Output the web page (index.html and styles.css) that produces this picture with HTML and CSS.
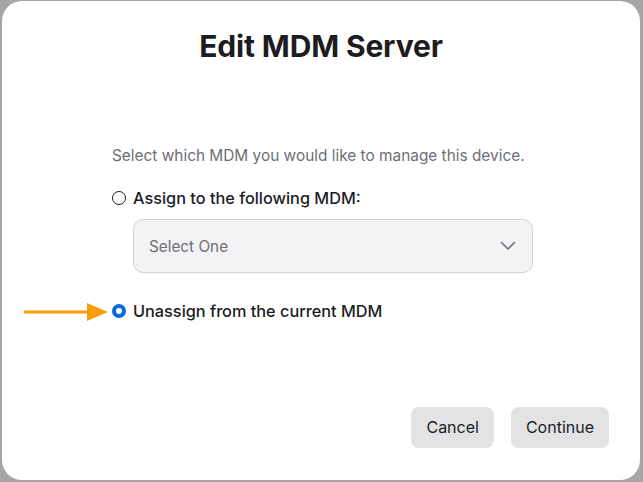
FILE: index.html
```html
<!DOCTYPE html>
<html>
<head>
<meta charset="utf-8">
<link rel="stylesheet" href="styles.css">
</head>
<body>
<div class="dialog">
  <h1 class="title">Edit MDM Server</h1>
  <div class="content">
    <p class="desc">Select which MDM you would like to manage this device.</p>
    <label class="option">
      <span class="radio"></span>
      <span class="label">Assign to the following MDM:</span>
    </label>
    <div class="select">
      <span class="select-text">Select One</span>
      <svg class="chevron" width="16" height="10" viewBox="0 0 16 10"><path d="M1.5 1.5 L8 8 L14.5 1.5" fill="none" stroke="#6e6e73" stroke-width="1.6" stroke-linecap="round" stroke-linejoin="round"/></svg>
    </div>
    <label class="option option-selected">
      <span class="radio radio-on"></span>
      <span class="label">Unassign from the current MDM</span>
      <svg class="arrow" width="84" height="20" viewBox="0 0 84 20"><line x1="0" y1="10" x2="68" y2="10" stroke="#f89e0f" stroke-width="3"/><polygon points="63,1 84,10 63,19" fill="#f89e0f"/></svg>
    </label>
  </div>
  <div class="actions">
    <button class="btn">Cancel</button>
    <button class="btn">Continue</button>
  </div>
</div>
</body>
</html>
```
FILE: styles.css
```css
html, body {
  margin: 0;
  padding: 0;
}
body {
  background: #a6a6a6;
  width: 643px;
  height: 482px;
  overflow: hidden;
  font-family: Inter, "Noto Sans", "Liberation Sans", sans-serif;
  color: #1d1d1f;
}
.dialog {
  box-sizing: border-box;
  margin: 1px 3px 0 2px;
  width: 638px;
  height: 479px;
  background: #fff;
  border-radius: 20px;
  display: flex;
  flex-direction: column;
  padding: 27px 0 0 0;
}
.title {
  margin: 0;
  text-align: center;
  font-size: 30px;
  line-height: 36px;
  font-weight: 700;
  letter-spacing: -0.15px;
  color: #1d1d1f;
}
.content {
  padding: 82px 0 0 110px;
  display: flex;
  flex-direction: column;
}
.desc {
  margin: 0;
  font-size: 15.4px;
  line-height: 20px;
  color: #6e6e73;
}
.option {
  position: relative;
  display: flex;
  align-items: center;
  gap: 7px;
  margin-top: 22px;
  height: 20px;
}
.option-selected {
  margin-top: 28px;
}
.radio {
  box-sizing: border-box;
  width: 14px;
  height: 14px;
  border: 1.3px solid #1d1d1f;
  border-radius: 50%;
  flex: none;
}
.radio-on {
  border: 4px solid #0a6ad6;
  background: #fff;
}
.label {
  font-size: 16.3px;
  font-weight: 500;
  line-height: 20px;
  color: #1d1d1f;
}
.arrow {
  position: absolute;
  left: -88px;
  top: 1px;
}
.select {
  box-sizing: border-box;
  margin: 11px 0 0 21px;
  width: 400px;
  height: 54px;
  background: #f3f3f5;
  border: 1px solid #d2d2d7;
  border-radius: 10px;
  display: flex;
  align-items: center;
  justify-content: space-between;
  padding: 0 16px 0 15px;
}
.select-text {
  font-size: 15.3px;
  color: #6e6e73;
}
.actions {
  margin-top: auto;
  display: flex;
  justify-content: flex-end;
  gap: 17px;
  padding: 0 31px 32px 0;
}
.btn {
  font-family: inherit;
  font-size: 16px;
  line-height: 20px;
  color: #1d1d1f;
  background: #e3e3e5;
  border: none;
  border-radius: 8px;
  height: 41px;
  padding: 0 15px 2px;
}
```
